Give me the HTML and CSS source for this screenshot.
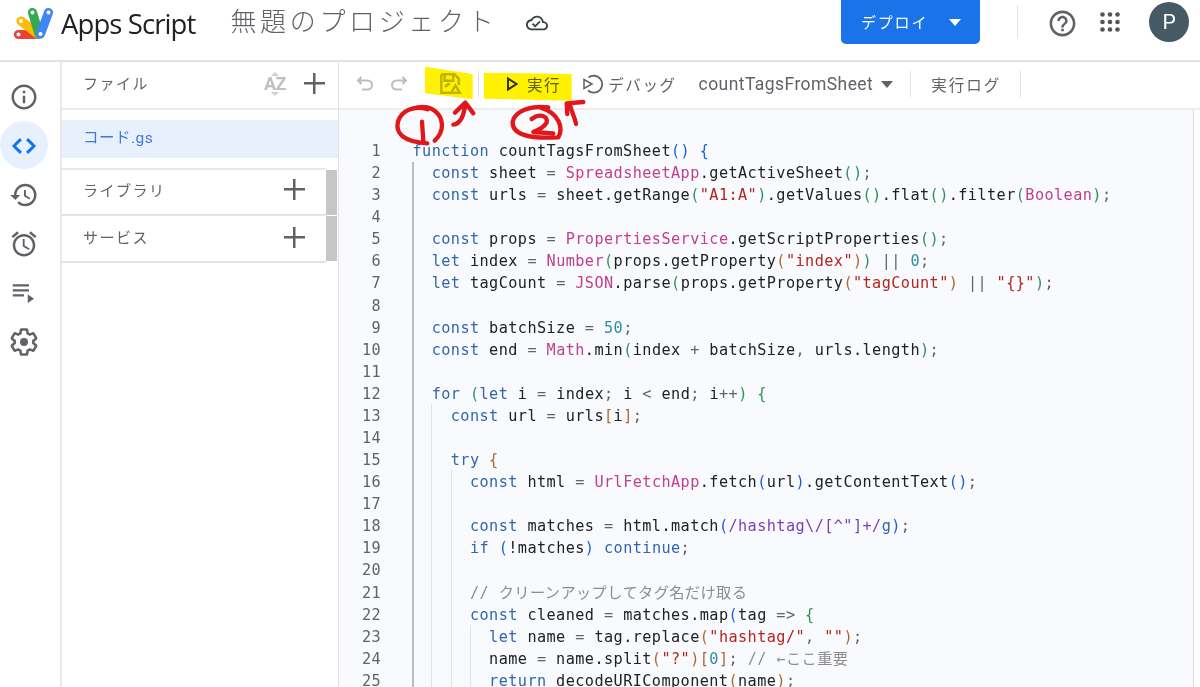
FILE: index.html
```html
<!DOCTYPE html>
<html lang="ja">
<head>
<meta charset="utf-8">
<title>Apps Script</title>
<link rel="stylesheet" href="styles.css">
</head>
<body>
<div class="app">
  <header class="topbar">
    <svg class="logo" viewBox="0 0 40 32" aria-hidden="true">
      <g fill="none" stroke-linecap="round" stroke-width="9.200">
        <path stroke="#ea4335" d="M5.500 26.500H24"/>
        <path stroke="#fbbc04" d="M8 13L25 26"/>
        <path stroke="#34a853" d="M19.500 4.500L26 26"/>
        <path stroke="#4285f4" d="M35.500 4.500L27.500 26"/>
      </g>
      <g fill="#fff">
        <circle cx="5.500" cy="26.500" r="2"/><circle cx="8" cy="13" r="2"/><circle cx="19.500" cy="4.500" r="2"/><circle cx="35.500" cy="4.500" r="2"/><circle cx="27.500" cy="26" r="2"/>
      </g>
    </svg>
    <span class="brand">Apps Script</span>
    <span class="title">無題のプロジェクト</span>
    <svg class="cloud" viewBox="0 0 24 24"><path d="M19.35 10.04C18.67 6.59 15.64 4 12 4 9.11 4 6.6 5.64 5.35 8.04 2.34 8.36 0 10.91 0 14c0 3.31 2.69 6 6 6h13c2.76 0 5-2.24 5-5 0-2.64-2.05-4.78-4.65-4.96zM19 18H6c-2.21 0-4-1.79-4-4 0-2.05 1.53-3.76 3.56-3.97l1.07-.11.5-.95C8.08 7.14 9.94 6 12 6c2.62 0 4.88 1.86 5.39 4.43l.3 1.5 1.53.11c1.56.1 2.78 1.41 2.78 2.96 0 1.65-1.35 3-3 3zm-9-3.820l-2.090-2.090L6.500 13.500 10 17l6.010-6.010-1.410-1.410z"/></svg>
    <div class="top-right">
      <button class="deploy"><span>デプロイ</span><i class="caret caret-white"></i></button>
      <span class="top-sep"></span>
      <svg class="help" viewBox="0 0 24 24"><path d="M11 18h2v-2h-2v2zm1-16C6.48 2 2 6.48 2 12s4.48 10 10 10 10-4.48 10-10S17.52 2 12 2zm0 18c-4.41 0-8-3.59-8-8s3.59-8 8-8 8 3.59 8 8-3.590 8-8 8zm0-14c-2.210 0-4 1.790-4 4h2c0-1.100.9-2 2-2s2 .9 2 2c0 2-3 1.750-3 5h2c0-2.250 3-2.500 3-5 0-2.210-1.790-4-4-4z"/></svg>
      <svg class="apps" viewBox="0 0 20 20"><g>
        <circle cx="2.500" cy="2.500" r="2.300"/><circle cx="10" cy="2.500" r="2.300"/><circle cx="17.500" cy="2.500" r="2.300"/>
        <circle cx="2.500" cy="10" r="2.300"/><circle cx="10" cy="10" r="2.300"/><circle cx="17.500" cy="10" r="2.300"/>
        <circle cx="2.500" cy="17.500" r="2.300"/><circle cx="10" cy="17.500" r="2.300"/><circle cx="17.500" cy="17.500" r="2.300"/>
      </g></svg>
      <span class="avatar">P</span>
    </div>
  </header>

  <div class="main">
    <nav class="rail">
      <span class="rail-item"><svg viewBox="0 0 24 24"><path d="M11 7h2v2h-2zm0 4h2v6h-2zm1-9C6.48 2 2 6.48 2 12s4.48 10 10 10 10-4.48 10-10S17.52 2 12 2zm0 18c-4.41 0-8-3.59-8-8s3.59-8 8-8 8 3.59 8 8-3.59 8-8 8z"/></svg></span>
      <span class="rail-item rail-active"><svg viewBox="0 0 24 24"><path class="chev" d="M9.500 6.500L4 12l5.500 5.500M14.500 6.500L20 12l-5.500 5.500"/></svg></span>
      <span class="rail-item"><svg viewBox="0 0 24 24"><path d="M13 3a9 9 0 0 0-9 9H1l3.890 3.890.07.14L9 12H6c0-3.870 3.130-7 7-7s7 3.130 7 7-3.130 7-7 7c-1.930 0-3.680-.79-4.940-2.060l-1.420 1.420A8.954 8.954 0 0 0 13 21a9 9 0 0 0 0-18zm-1 5v5l4.280 2.540.72-1.210-3.500-2.080V8H12z"/></svg></span>
      <span class="rail-item"><svg viewBox="0 0 24 24"><path d="M22 5.720l-4.600-3.860-1.290 1.530 4.600 3.860L22 5.720zM7.880 3.390L6.600 1.860 2 5.710l1.290 1.530 4.590-3.850zM12.500 8H11v6l4.750 2.850.75-1.230-4-2.370V8zM12 4c-4.970 0-9 4.030-9 9s4.030 9 9 9 9-4.030 9-9-4.030-9-9-9zm0 16c-3.870 0-7-3.130-7-7s3.130-7 7-7 7 3.130 7 7-3.130 7-7 7z"/></svg></span>
      <span class="rail-item"><svg viewBox="0 0 24 24"><path d="M3 5h13v1.800H3zm0 4h13v1.800H3zm0 4h9v1.800H3zm12 0v7l5-3.500z"/></svg></span>
      <span class="rail-item"><svg viewBox="0 0 24 24"><path class="gear" d="M19.430 12.980c.04-.32.07-.64.07-.98s-.03-.66-.07-.98l2.110-1.650c.19-.15.24-.42.12-.64l-2-3.460c-.12-.22-.39-.3-.61-.22l-2.490 1c-.52-.4-1.080-.73-1.690-.98l-.38-2.650C14.460 2.180 14.250 2 14 2h-4c-.25 0-.46.18-.49.42l-.38 2.650c-.61.25-1.170.59-1.690.98l-2.490-1c-.23-.09-.49 0-.61.22l-2 3.460c-.13.22-.07.49.12.64l2.110 1.650c-.04.32-.07.65-.07.98s.03.66.07.98l-2.110 1.650c-.19.15-.24.42-.12.64l2 3.460c.12.22.39.3.61.22l2.490-1c.52.4 1.080.73 1.690.98l.38 2.650c.03.24.24.42.49.42h4c.25 0 .46-.18.49-.42l.38-2.650c.61-.25 1.170-.59 1.690-.98l2.490 1c.23.09.49 0 .61-.22l2-3.460c.12-.22.07-.49-.12-.64l-2.110-1.650z"/><circle cx="12" cy="12" r="3.200"/></svg></span>
    </nav>

    <aside class="panel">
      <div class="panel-head">
        <span class="panel-label">ファイル</span>
        <span class="sort"><i class="sort-up"></i><b>AZ</b><i class="sort-down"></i></span>
        <i class="plus plus-head"></i>
      </div>
      <div class="file-list"><div class="file">コード.gs</div></div>
      <div class="section first">
        <span class="panel-label">ライブラリ</span><i class="plus"></i><span class="thumb"></span>
      </div>
      <div class="section">
        <span class="panel-label">サービス</span><i class="plus"></i><span class="thumb"></span>
      </div>
    </aside>

    <section class="work">
      <div class="toolbar">
        <svg class="tool t-undo" viewBox="0 0 20 20"><path d="M6.500 3L3 6.500 6.500 10M3 6.500h9.500a4.500 4.500 0 0 1 0 9H7"/></svg>
        <svg class="tool t-redo" viewBox="0 0 20 20"><path d="M13.500 3L17 6.500 13.500 10M17 6.500H7.500a4.500 4.500 0 0 0 0 9H13"/></svg>
        <svg class="tool t-save" viewBox="0 0 22 22"><path d="M3 2h12l4 4v6M11 19H3V2M6 3v5h8V3M7 14a4 4 0 0 1 4-3"/><path d="M16 12.500l4 6.500h-8z"/></svg>
        <span class="sep t-sep1"></span>
        <svg class="t-play" viewBox="0 0 12 14"><path d="M2 1.500L10.500 7 2 12.500z"/></svg>
        <span class="tool-text t-run">実行</span>
        <svg class="t-debug" viewBox="0 0 22 22"><path class="debug-arc" d="M6.500 4.500A8.500 8.500 0 1 1 6 17.500"/><path class="debug-tri" d="M2 6.500l8 4.500-8 4.500z"/></svg>
        <span class="tool-text t-debug-text">デバッグ</span>
        <span class="func">countTagsFromSheet</span><i class="caret caret-gray"></i>
        <span class="sep t-sep2"></span>
        <span class="tool-text t-log">実行ログ</span>
        <span class="sep t-sep3"></span>
      </div>

      <div class="editor">
        <span class="guide g1"></span><span class="guide g2"></span><span class="guide g3"></span><span class="guide g4"></span>
        <div class="line"><span class="n">1</span><code><b class="k">function</b> countTagsFromSheet<b class="b1">()</b> <b class="b1">{</b></code></div>
        <div class="line"><span class="n">2</span><code>  <b class="k">const</b> sheet <b class="o">=</b> <b class="c">SpreadsheetApp</b>.getActiveSheet<b class="b2">()</b><b class="o">;</b></code></div>
        <div class="line"><span class="n">3</span><code>  <b class="k">const</b> urls <b class="o">=</b> sheet.getRange<b class="b2">(</b><b class="s">"A1:A"</b><b class="b2">)</b>.getValues<b class="b2">()</b>.flat<b class="b2">()</b>.filter<b class="b2">(</b><b class="c">Boolean</b><b class="b2">)</b><b class="o">;</b></code></div>
        <div class="line"><span class="n">4</span><code></code></div>
        <div class="line"><span class="n">5</span><code>  <b class="k">const</b> props <b class="o">=</b> <b class="c">PropertiesService</b>.getScriptProperties<b class="b2">()</b><b class="o">;</b></code></div>
        <div class="line"><span class="n">6</span><code>  <b class="k">let</b> index <b class="o">=</b> <b class="c">Number</b><b class="b2">(</b>props.getProperty<b class="b3">(</b><b class="s">"index"</b><b class="b3">)</b><b class="b2">)</b> <b class="o">||</b> <b class="d">0</b><b class="o">;</b></code></div>
        <div class="line"><span class="n">7</span><code>  <b class="k">let</b> tagCount <b class="o">=</b> <b class="c">JSON</b>.parse<b class="b2">(</b>props.getProperty<b class="b3">(</b><b class="s">"tagCount"</b><b class="b3">)</b> <b class="o">||</b> <b class="s">"{}"</b><b class="b2">)</b><b class="o">;</b></code></div>
        <div class="line"><span class="n">8</span><code></code></div>
        <div class="line"><span class="n">9</span><code>  <b class="k">const</b> batchSize <b class="o">=</b> <b class="d">50</b><b class="o">;</b></code></div>
        <div class="line"><span class="n">10</span><code>  <b class="k">const</b> end <b class="o">=</b> <b class="c">Math</b>.min<b class="b2">(</b>index <b class="o">+</b> batchSize<b class="o">,</b> urls.length<b class="b2">)</b><b class="o">;</b></code></div>
        <div class="line"><span class="n">11</span><code></code></div>
        <div class="line"><span class="n">12</span><code>  <b class="k">for</b> <b class="b2">(</b><b class="k">let</b> i <b class="o">=</b> index<b class="o">;</b> i <b class="o">&lt;</b> end<b class="o">;</b> i<b class="o">++</b><b class="b2">)</b> <b class="b2">{</b></code></div>
        <div class="line"><span class="n">13</span><code>    <b class="k">const</b> url <b class="o">=</b> urls<b class="b3">[</b>i<b class="b3">]</b><b class="o">;</b></code></div>
        <div class="line"><span class="n">14</span><code></code></div>
        <div class="line"><span class="n">15</span><code>    <b class="k">try</b> <b class="b3">{</b></code></div>
        <div class="line"><span class="n">16</span><code>      <b class="k">const</b> html <b class="o">=</b> <b class="c">UrlFetchApp</b>.fetch<b class="b1">(</b>url<b class="b1">)</b>.getContentText<b class="b1">()</b><b class="o">;</b></code></div>
        <div class="line"><span class="n">17</span><code></code></div>
        <div class="line"><span class="n">18</span><code>      <b class="k">const</b> matches <b class="o">=</b> html.match<b class="b1">(</b><b class="r">/hashtag\/[^"]+/</b><b class="k">g</b><b class="b1">)</b><b class="o">;</b></code></div>
        <div class="line"><span class="n">19</span><code>      <b class="k">if</b> <b class="b1">(</b>!matches<b class="b1">)</b> <b class="k">continue</b><b class="o">;</b></code></div>
        <div class="line"><span class="n">20</span><code></code></div>
        <div class="line"><span class="n">21</span><code>      <b class="m">// クリーンアップしてタグ名だけ取る</b></code></div>
        <div class="line"><span class="n">22</span><code>      <b class="k">const</b> cleaned <b class="o">=</b> matches.map<b class="b1">(</b>tag <b class="o">=&gt;</b> <b class="b2">{</b></code></div>
        <div class="line"><span class="n">23</span><code>        <b class="k">let</b> name <b class="o">=</b> tag.replace<b class="b3">(</b><b class="s">"hashtag/"</b><b class="o">,</b> <b class="s">""</b><b class="b3">)</b><b class="o">;</b></code></div>
        <div class="line"><span class="n">24</span><code>        name <b class="o">=</b> name.split<b class="b3">(</b><b class="s">"?"</b><b class="b3">)[</b><b class="d">0</b><b class="b3">]</b><b class="o">;</b> <b class="m">// ←ここ重要</b></code></div>
        <div class="line"><span class="n">25</span><code>        <b class="k">return</b> decodeURIComponent<b class="b3">(</b>name<b class="b3">)</b><b class="o">;</b></code></div>
        <span class="ruler-mark"></span>
      </div>
    </section>
  </div>

  <svg class="annotations" viewBox="0 0 1200 687" aria-hidden="true">
    <g transform="translate(340 50) scale(.3333)">
      <path class="hl" d="M255 50L398 72V148L255 130z"/>
      <path class="hl" d="M432 68L695 72V152L432 146z"/>
      <path class="pen" d="M262 178C225 165 185 180 174 215C165 250 190 275 262 280M232 172C275 165 305 190 306 225C306 245 295 262 284 272M246 215L250 275"/>
      <path class="pen" d="M340 224C360 222 372 200 376 160M345 188L376 158L400 190"/>
      <path class="pen" d="M625 172C570 165 525 185 518 215C515 250 560 268 655 262C670 235 660 190 600 172M575 207C595 190 625 195 620 218C610 235 595 240 580 246L640 250"/>
      <path class="pen" d="M730 156L680 160L682 192M708 222C705 205 695 185 690 165"/>
    </g>
  </svg>
</div>
</body>
</html>
```
FILE: styles.css
```css
* { box-sizing: border-box; }
html, body { margin: 0; height: 100%; overflow: hidden; background: #fff; }
body { font-family: Roboto, "Noto Sans CJK JP", sans-serif; color: #5f6368; }
b { font-weight: inherit; }
i { font-style: normal; display: block; }

.app { position: relative; width: 1200px; height: 687px; display: flex; flex-direction: column; overflow: hidden; }

/* top bar */
.topbar { height: 62px; flex: none; display: flex; align-items: flex-start; border-bottom: 2px solid #e3e3e3; }
.logo { width: 40px; height: 32px; margin: 8px 0 0 13px; flex: none; overflow: visible; }
.brand { margin: 5px 0 0 8px; font: 400 27.500px/38px "Open Sans", Roboto, sans-serif; letter-spacing: -.9px; color: #202124; }
.title { margin: 1px 0 0 35px; font: 300 26px/38px "Noto Sans CJK JP", sans-serif; letter-spacing: 3.650px; color: #5f6368; white-space: nowrap; }
.cloud { width: 22px; height: 22px; margin: 12px 0 0 29px; fill: #3c4043; flex: none; }
.top-right { margin-left: auto; display: flex; align-items: flex-start; padding-right: 11px; }
.deploy { width: 139px; height: 44px; border: 0; border-radius: 0 0 5px 5px; background: #1a73e8; color: #fff; display: flex; align-items: center; padding: 0 19px 2px 20px; font: 400 15px/1 "Noto Sans CJK JP", sans-serif; letter-spacing: 1.800px; }
.caret { width: 0; height: 0; border-style: solid; border-width: 7px 6.500px 0; border-color: transparent; }
.caret-white { border-top-color: #fff; margin: 2px 0 0 auto; }
.caret-gray { border-top-color: #5f6368; margin: 1px 0 0 8px; }
.top-sep { width: 1px; height: 34px; margin: 5px 0 0 37px; background: #e3e3e3; }
.help { width: 31px; height: 31px; margin: 7.500px 0 0 28.500px; fill: #5f6368; }
.apps { width: 20px; height: 20px; margin: 12px 0 0 22.500px; fill: #555; }
.avatar { width: 40px; height: 40px; margin: 2px 0 0 29px; border-radius: 50%; background: #455a64; color: #fff; font: 400 21px/40px Roboto, sans-serif; text-align: center; }

.main { flex: 1; display: flex; min-height: 0; }

/* rail */
.rail { width: 62px; flex: none; border-right: 2px solid #e8e8e8; display: flex; flex-direction: column; padding-top: 10px; }
.rail-item { width: 48px; height: 49px; display: flex; align-items: center; justify-content: center; flex: none; }
.rail-item svg { width: 30px; height: 30px; fill: #5f6368; }
.rail-active { position: relative; }
.rail-active::before { content: ""; position: absolute; left: 0; top: 0; width: 48px; height: 48px; border-radius: 50%; background: #e8f0fe; }
.rail-active svg { position: relative; }
.chev { fill: none; stroke: #1a73e8; stroke-width: 2.400; }
.gear { fill: none; stroke: #5f6368; stroke-width: 2; }

/* file panel */
.panel { width: 277px; flex: none; border-right: 1px solid #e3e3e3; }
.panel-label { font: 400 15px/22px "Noto Sans CJK JP", sans-serif; letter-spacing: 1.500px; color: #5f6368; }
.panel-head { height: 48px; padding: 0 13px 3px 21px; display: flex; align-items: center; border-bottom: 2px solid #ececec; }
.panel-head .panel-label { margin-top: -2px; }
.sort { margin-left: auto; width: 26px; display: flex; flex-direction: column; align-items: center; color: #c0c0c0; }
.sort b { font: 700 18px/16px Roboto, sans-serif; letter-spacing: -.5px; }
.sort-up { width: 0; height: 0; border: solid transparent; border-width: 0 4px 4px; border-bottom-color: #d0d0d0; }
.sort-down { width: 0; height: 0; border: solid transparent; border-width: 4px 4px 0; border-top-color: #d0d0d0; }
.plus { width: 21px; height: 21px; flex: none; background: linear-gradient(#5f6368, #5f6368) center / 100% 2.500px no-repeat, linear-gradient(#5f6368, #5f6368) center / 2.500px 100% no-repeat; }
.plus-head { margin-left: 16px; }
.file-list { padding-top: 10px; height: 58px; }
.file { height: 38px; padding-left: 21px; background: #e8f0fe; color: #3f7bd6; font: 400 15.500px/37px Roboto, "Noto Sans CJK JP", sans-serif; letter-spacing: .5px; }
.section { position: relative; height: 47px; padding: 0 21px 3px 21px; display: flex; align-items: center; justify-content: space-between; border-bottom: 2px solid #e3e3e3; margin-right: 12px; }
.section.first { border-top: 2px solid #e8e8e8; height: 48px; padding-bottom: 5px; }
.thumb { position: absolute; right: -11px; top: 0; width: 11px; height: 45px; background: #c6c6c6; }

/* workspace */
.work { flex: 1; min-width: 0; display: flex; flex-direction: column; }
.toolbar { height: 48px; flex: none; display: flex; align-items: center; border-bottom: 2px solid #ececec; padding-bottom: 2px; }
.tool { width: 20px; height: 20px; flex: none; fill: none; stroke: #bdbdbd; stroke-width: 2; }
.t-undo { margin-left: 16px; }
.t-redo { margin-left: 14px; }
.t-save { width: 24px; height: 24px; margin-left: 29px; stroke: #bdbdbd; stroke-width: 2.200; }
.sep { width: 1px; height: 26px; background: #e3e3e3; flex: none; }
.t-sep1 { margin-left: 16px; }
.t-play { width: 12px; height: 14px; margin-left: 27px; flex: none; fill: none; stroke: #333; stroke-width: 2; }
.tool-text { font: 400 15.500px/22px "Noto Sans CJK JP", sans-serif; letter-spacing: 1.600px; color: #5f6368; white-space: nowrap; }
.t-run { margin-left: 9px; }
.t-debug { width: 22px; height: 22px; margin-left: 21px; flex: none; }
.debug-arc { fill: none; stroke: #5f6368; stroke-width: 1.800; }
.debug-tri { fill: #fff; stroke: #5f6368; stroke-width: 1.500; }
.t-debug-text { margin-left: 4px; letter-spacing: 1.600px; }
.func { margin-left: 22px; font: 400 17.500px/22px Roboto, sans-serif; color: #5f6368; letter-spacing: .43px; white-space: nowrap; }
.t-sep2 { margin-left: 17px; }
.t-log { margin-left: 20px; letter-spacing: 2px; }
.t-sep3 { margin-left: 19px; }

/* editor */
.editor { position: relative; flex: 1; min-height: 0; overflow: hidden; background: #f9fafd; padding-top: 30px; border-right: 6px solid #fff; }
.editor::after { content: ""; position: absolute; right: 0; top: 0; bottom: 0; width: 1px; background: #dedede; }
.line { display: flex; height: 22.080px; font: 400 15.200px/22px "DejaVu Sans Mono", "Noto Sans CJK JP", monospace; letter-spacing: .43px; color: #202124; }
.n { width: 42px; flex: none; text-align: right; color: #5f6368; letter-spacing: .4px; }
.line code { margin-left: 31.500px; font: inherit; white-space: pre; }
.k { color: #2f66ad; }
.c { color: #c0408f; }
.s { color: #b3261e; }
.d { color: #2a8fa3; }
.r { color: #7b3fb5; }
.m { color: #8c8c8c; }
.o { color: #5f6368; }
.b1 { color: #1a5fdc; }
.b2 { color: #2f9257; }
.b3 { color: #ad6a2d; }
.guide { position: absolute; bottom: 0; width: 1px; background: #e4e4e4; }
.g1 { left: 73px; top: 52px; width: 2px; background: #bcbcbc; }
.g2 { left: 92px; top: 294px; }
.g3 { left: 112px; top: 360px; }
.g4 { left: 131px; top: 515px; }
.ruler-mark { position: absolute; right: -6px; top: 457px; width: 5px; height: 2px; background: #6b6b6b; }

/* annotations over the screenshot */
.annotations { position: absolute; left: 0; top: 0; width: 1200px; height: 687px; pointer-events: none; }
.hl { fill: #fff200; mix-blend-mode: multiply; }
.pen { fill: none; stroke: #e0181c; stroke-width: 13; stroke-linecap: round; stroke-linejoin: round; }
```
